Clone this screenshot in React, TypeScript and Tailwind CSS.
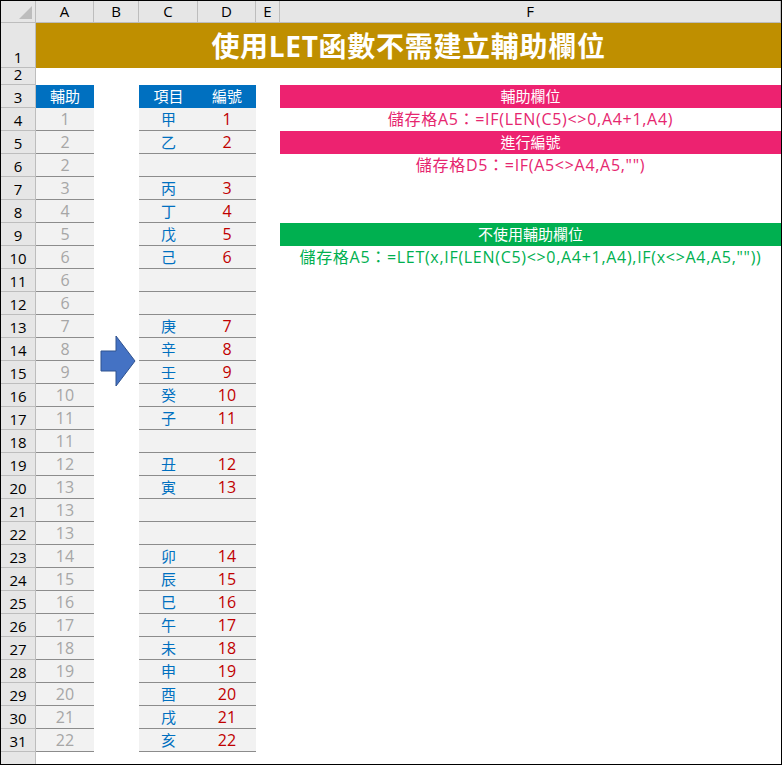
import React from 'react';

const cols = [58, 45, 59, 58, 24, 502];
const colNames = ['A', 'B', 'C', 'D', 'E', 'F'];

const aVals = [1, 2, 2, 3, 4, 5, 6, 6, 6, 7, 8, 9, 10, 11, 11, 12, 13, 13, 13, 14, 15, 16, 17, 18, 19, 20, 21, 22];
const cVals = ['甲', '乙', '', '丙', '丁', '戊', '己', '', '', '庚', '辛', '壬', '癸', '子', '', '丑', '寅', '', '', '卯', '辰', '巳', '午', '未', '申', '酉', '戌', '亥'];

const formula = 'text-center text-[16px] tracking-[0.7px] leading-[22px] whitespace-nowrap';

function fCell(row: number) {
  if (row === 3) return <div className="h-full bg-[#ed2270] text-white text-center leading-[22px]">輔助欄位</div>;
  if (row === 4) return <div className={`${formula} text-[#e6266f]`}>儲存格A5：=IF(LEN(C5)&lt;&gt;0,A4+1,A4)</div>;
  if (row === 5) return <div className="h-full bg-[#ed2270] text-white text-center leading-[22px]">進行編號</div>;
  if (row === 6) return <div className={`${formula} text-[#e6266f]`}>儲存格D5：=IF(A5&lt;&gt;A4,A5,"")</div>;
  if (row === 9) return <div className="h-full bg-[#00b050] text-white text-center leading-[22px]">不使用輔助欄位</div>;
  if (row === 10) return <div className={`${formula} text-[#00b050]`}>儲存格A5：=LET(x,IF(LEN(C5)&lt;&gt;0,A4+1,A4),IF(x&lt;&gt;A4,A5,""))</div>;
  return null;
}

function RowHead({ n, h }: { n: string; h: number }) {
  return (
    <div
      className="w-[35px] shrink-0 bg-[#e6e6e6] border-r border-b border-[#bdbdbd] text-[15px] leading-[18px] text-black flex items-end justify-center pb-[1px] overflow-hidden"
      style={{ height: h }}
    >
      {n}
    </div>
  );
}

export default function App() {
  const rows = [];
  for (let r = 3; r <= 31; r++) {
    const i = r - 4;
    const data = r >= 4;
    rows.push(
      <div key={r} className="flex h-[23px]">
        <RowHead n={String(r)} h={23} />
        <div className={`w-[58px] shrink-0 text-center ${r === 3 ? 'bg-[#0070c0] text-white' : 'bg-[#f2f2f2] text-[#a6a6a6] text-[16px] border-b border-[#8c8c8c]'}`}>
          {r === 3 ? '輔助' : aVals[i]}
        </div>
        <div className="w-[45px] shrink-0" />
        <div className={`w-[59px] shrink-0 text-center ${r === 3 ? 'bg-[#0070c0] text-white' : 'bg-[#f2f2f2] text-[#0070c0] border-b border-[#8c8c8c]'}`}>
          {r === 3 ? '項目' : cVals[i]}
        </div>
        <div className={`w-[58px] shrink-0 text-center ${r === 3 ? 'bg-[#0070c0] text-white' : 'bg-[#f2f2f2] text-[#c00000] text-[16px] border-b border-[#8c8c8c]'}`}>
          {r === 3 ? '編號' : data && cVals[i] ? aVals[i] : ''}
        </div>
        <div className="w-[24px] shrink-0" />
        <div className="flex-1 min-w-0">{fCell(r)}</div>
      </div>
    );
  }

  return (
    <div
      className="relative w-[782px] h-[765px] overflow-hidden bg-white border border-black text-[15px] leading-[22px]"
      style={{ fontFamily: '"Open Sans", "Noto Sans CJK TC", sans-serif' }}
    >
      {/* column headers */}
      <div className="flex h-[22px]">
        <div className="w-[35px] shrink-0 bg-[#e6e6e6] border-r border-b border-[#bdbdbd] relative">
          <svg className="absolute right-[3px] bottom-[3px]" width="13" height="13" viewBox="0 0 13 13">
            <polygon points="13,0 13,13 0,13" fill="#bdbdbd" />
          </svg>
        </div>
        {colNames.map((c, k) => (
          <div
            key={c}
            className="shrink-0 bg-[#e6e6e6] border-r border-b border-[#bdbdbd] text-center text-[15px] leading-[21px] text-black"
            style={{ width: k === 5 ? undefined : cols[k], flex: k === 5 ? 1 : undefined }}
          >
            {c}
          </div>
        ))}
      </div>
      {/* row 1 title */}
      <div className="flex h-[45px]">
        <RowHead n="1" h={45} />
        <div className="flex-1 bg-[#bf8f00] text-white font-bold text-[28px] flex items-center justify-center tracking-wide">
          使用LET函數不需建立輔助欄位
        </div>
      </div>
      {/* row 2 */}
      <div className="flex h-[17px]">
        <RowHead n="2" h={17} />
      </div>
      {rows}
      <div className="flex h-[23px]">
        <RowHead n="" h={23} />
      </div>

      {/* arrow shape */}
      <svg className="absolute left-[99px] top-[334px]" width="36" height="52" viewBox="0 0 36 52">
        <polygon points="1,16 16,16 16,1 35,26 16,51 16,36 1,36" fill="#4472c4" stroke="#2f528f" strokeWidth="1" />
      </svg>
    </div>
  );
}
